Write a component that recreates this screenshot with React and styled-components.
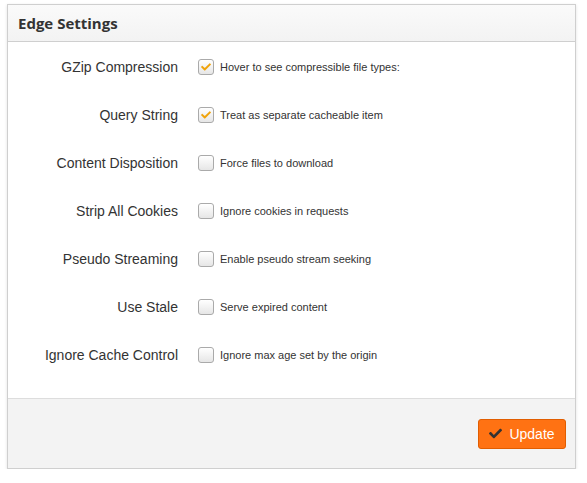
import React from "react";
import styled, { createGlobalStyle } from "styled-components";
import { FaCheck } from "react-icons/fa";

const GlobalStyle = createGlobalStyle`
  body {
    margin: 0;
    background: #fff;
    font-family: "Liberation Sans", Arial, sans-serif;
    color: #333;
  }
`;

const Panel = styled.div`
  margin: 4px 0 0 7px;
  width: 567px;
  border: 1px solid #cfcfcf;
  background: #fff;
  box-shadow: 0 1px 3px rgba(0, 0, 0, 0.12);
`;

const Header = styled.div`
  height: 36px;
  padding: 0 10px;
  display: flex;
  align-items: center;
  border-bottom: 1px solid #cfcfcf;
  background: linear-gradient(#fafafa, #f3f3f3);
`;

const Title = styled.h3`
  margin: 0;
  font-family: "Open Sans", sans-serif;
  font-size: 15px;
  font-weight: 700;
  color: #333;
`;

const Body = styled.div`
  padding: 13px 0 31px;
  display: flex;
  flex-direction: column;
  gap: 24px;
`;

const Row = styled.div`
  display: grid;
  grid-template-columns: 170px 1fr;
  column-gap: 20px;
  align-items: center;
  height: 24px;
`;

const Label = styled.div`
  text-align: right;
  font-size: 14px;
  color: #333;
`;

const Option = styled.label`
  display: flex;
  align-items: center;
  gap: 6px;
  font-size: 11px;
  color: #333;
`;

const Box = styled.span`
  width: 16px;
  height: 16px;
  box-sizing: border-box;
  border: 1px solid #aaa;
  border-radius: 3px;
  background: linear-gradient(#ffffff, #e6e6e6);
  display: flex;
  align-items: center;
  justify-content: center;
  color: #f0a30a;
  font-size: 10px;
`;

const Footer = styled.div`
  height: 69px;
  border-top: 1px solid #ddd;
  background: #f3f3f3;
  display: flex;
  align-items: center;
  justify-content: flex-end;
  padding: 0 9px;
`;

const Button = styled.button`
  width: 88px;
  height: 30px;
  border: 1px solid #e15d00;
  border-radius: 3px;
  background: #ff7213;
  color: #fff;
  font-family: "Liberation Sans", Arial, sans-serif;
  font-size: 14px;
  display: flex;
  align-items: center;
  justify-content: center;
  gap: 7px;
  padding: 0;
  cursor: pointer;

  svg {
    color: #333;
    font-size: 13px;
  }
`;

const rows = [
  { label: "GZip Compression", text: "Hover to see compressible file types:", checked: true },
  { label: "Query String", text: "Treat as separate cacheable item", checked: true },
  { label: "Content Disposition", text: "Force files to download" },
  { label: "Strip All Cookies", text: "Ignore cookies in requests" },
  { label: "Pseudo Streaming", text: "Enable pseudo stream seeking" },
  { label: "Use Stale", text: "Serve expired content" },
  { label: "Ignore Cache Control", text: "Ignore max age set by the origin" },
];

export default function App() {
  return (
    <>
      <GlobalStyle />
      <Panel>
        <Header>
          <Title>Edge Settings</Title>
        </Header>
        <Body>
          {rows.map((r) => (
            <Row key={r.label}>
              <Label>{r.label}</Label>
              <Option>
                <Box>{r.checked && <FaCheck />}</Box>
                {r.text}
              </Option>
            </Row>
          ))}
        </Body>
        <Footer>
          <Button>
            <FaCheck />
            Update
          </Button>
        </Footer>
      </Panel>
    </>
  );
}
